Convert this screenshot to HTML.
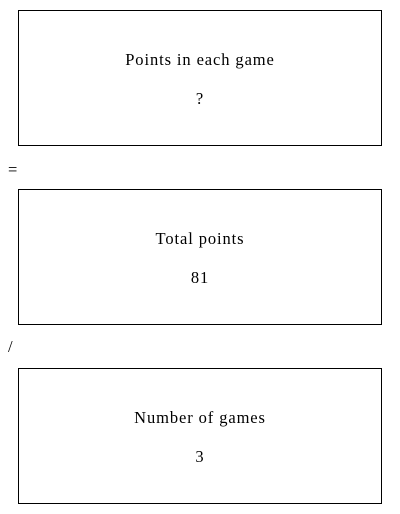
<!DOCTYPE html>
<html><head><style>
body{margin:0;width:400px;height:514px;background:#fff;font-family:"Liberation Serif",serif;font-size:16.5px;letter-spacing:0.9px;color:#000;position:relative}
.b{position:absolute;left:18px;width:362px;height:134px;border:1px solid #000;text-align:center}
.t{position:absolute;left:0;right:0;top:39px;line-height:20px}
.v{position:absolute;left:0;right:0;top:78px;line-height:20px}
.op{position:absolute;left:8px;line-height:20px}
</style></head><body>
<div class="b" style="top:10px"><div class="t">Points in each game</div><div class="v">?</div></div>
<div class="op" style="top:160px">=</div>
<div class="b" style="top:189px"><div class="t">Total points</div><div class="v">81</div></div>
<div class="op" style="top:337px">/</div>
<div class="b" style="top:368px"><div class="t">Number of games</div><div class="v">3</div></div>
</body></html>
